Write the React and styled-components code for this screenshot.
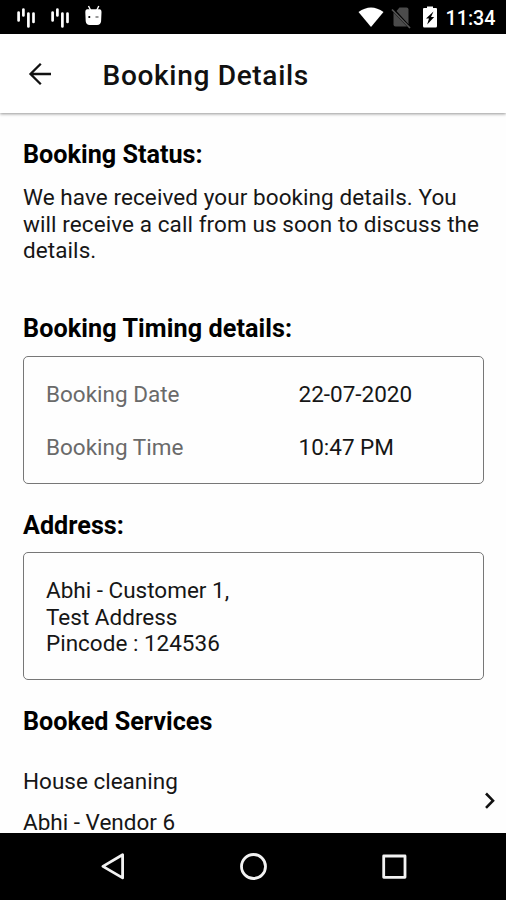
import React from 'react';
import styled, { createGlobalStyle } from 'styled-components';

const GlobalStyle = createGlobalStyle`
  * {
    box-sizing: border-box;
  }

  body {
    margin: 0;
    background: #fff;
  }
`;

const Screen = styled.div`
  display: flex;
  flex-direction: column;
  width: 506px;
  height: 900px;
  overflow: hidden;
  background: #fefefe;
  color: #111;
  font-family: Roboto, 'Liberation Sans', sans-serif;
`;

const StatusBar = styled.div`
  display: flex;
  flex: none;
  justify-content: space-between;
  height: 34px;
  background: #000;
`;

const Clock = styled.span`
  margin-left: 9px;
  color: #fff;
  font-size: 19.7px;
  font-weight: 500;
  line-height: 37px;
`;

const StatusGroup = styled.div`
  display: flex;
  padding: ${(props) => props.$padding};
`;

const AppBar = styled.header`
  display: flex;
  flex: none;
  align-items: center;
  height: 79px;
  padding-left: 26px;
  background: #fff;
  box-shadow: 0 1px 3px rgba(0, 0, 0, 0.42);
  z-index: 1;
`;

const Title = styled.h1`
  margin: 5px 0 0 48.5px;
  font-size: 28.1px;
  font-weight: 500;
  line-height: 34px;
  letter-spacing: 0.65px;
`;

const Content = styled.main`
  flex: 1;
  min-height: 0;
  overflow: hidden;
  padding: 27px 0 0 23px;
`;

const Section = styled.section`
  height: ${(props) => props.$height}px;
`;

const Heading = styled.h2`
  margin: 0 0 ${(props) => props.$gap}px;
  color: #000;
  font-size: 25.2px;
  font-weight: 700;
  line-height: 30px;
  letter-spacing: ${(props) => props.$spacing || 0}px;
  white-space: nowrap;
`;

const Text = styled.p`
  margin: 0;
  color: ${(props) => (props.$muted ? '#6a6a6a' : '#161616')};
  font-size: 22.5px;
  line-height: 26.7px;
  white-space: pre-line;
`;

const Message = styled(Text)`
  letter-spacing: 0.08px;
`;

const Card = styled.div`
  width: 461px;
  height: 128px;
  padding: 24px 22px;
  border: 1px solid #777;
  border-radius: 5px;
`;

const Timing = styled(Card)`
  display: grid;
  grid-template-columns: 252.5px 1fr;
  row-gap: 26px;
  align-content: start;
`;

const Service = styled.div`
  display: flex;
  align-items: center;
  justify-content: space-between;
  padding-right: 10px;
`;

const ServiceLine = styled(Text)`
  line-height: 20px;
`;

const ServiceLines = styled.div`
  display: flex;
  flex-direction: column;
  gap: 21px;
`;

const NavBar = styled.nav`
  display: flex;
  flex: none;
  align-items: center;
  justify-content: center;
  gap: 112px;
  height: 67px;
  background: #000;
`;

const Icon = styled.svg`
  display: block;
  flex: none;
`;

const BarsIcon = () => (
  <Icon width="34" height="34" viewBox="0 0 34 34" fill="none" stroke="#fff" strokeWidth="2.7" strokeLinecap="round">
    <path d="M2.6 12.5v8M7.4 9.5v6M12.4 13.5v13M17.5 13.5v8.5" />
  </Icon>
);

const AndroidIcon = () => (
  <Icon width="20" height="34" viewBox="0 0 20 34">
    <path d="M4.5 6l2 4M14.8 6l-2 4" stroke="#fff" strokeWidth="1.4" />
    <path d="M3.3 9.3h12.2q2 0 2 3l-.4 9q-.4 3.7-4 3.7H5.7q-3.6 0-4-3.7l-.4-9q0-3 2-3z" fill="#fff" />
    <circle cx="5.3" cy="17" r="1.1" fill="#000" />
    <path d="M11.5 17h3" stroke="#555" strokeWidth="1.2" />
  </Icon>
);

const WifiIcon = () => (
  <Icon width="26" height="34" viewBox="0 0 26 34">
    <path d="M.5 12Q13 2.8 25.5 12L13 27z" fill="#fff" />
  </Icon>
);

const NoSimIcon = () => (
  <Icon width="20" height="34" viewBox="0 0 20 34">
    <path d="M8.5 7.5h7q2 0 2 2v14.8L5.5 11z" fill="#4b4b4b" />
    <path d="M2.5 12.5l13.5 14H4.5q-2 0-2-2z" fill="#4b4b4b" />
    <path d="M1 9.5L19 28" stroke="#555" strokeWidth="1.7" />
  </Icon>
);

const BatteryIcon = () => (
  <Icon width="14" height="34" viewBox="0 0 14 34">
    <path d="M4 6.5h6V8h3q1 0 1 1v17q0 1.500-1.300 1.500H1.300Q0 27.500 0 26V9q0-1 1-1h3z" fill="#fff" />
    <path d="M10.5 11.5L3 18.5h3L4.2 24.5l7-7.5H8z" fill="#000" />
  </Icon>
);

const BackArrow = () => (
  <Icon width="28" height="28" viewBox="0 0 28 28" fill="none" stroke="#111" strokeWidth="2.3">
    <path d="M25 14H4.500M14.800 3.800L4.500 14l10.300 10.200" />
  </Icon>
);

const Chevron = () => (
  <Icon width="11" height="20" viewBox="0 0 11 20" fill="none" stroke="#111" strokeWidth="2.6">
    <path d="M1 1.500L8 8.700l-7 7.200" />
  </Icon>
);

const NavIcon = ({ children }) => (
  <Icon width="29" height="29" viewBox="0 0 29 29" fill="none" stroke="#f2f2f2" strokeWidth="2.8" strokeLinejoin="round">
    {children}
  </Icon>
);

const timing = [
  { label: 'Booking Date', value: '22-07-2020' },
  { label: 'Booking Time', value: '10:47 PM' },
];

export default function App() {
  return (
    <Screen>
      <GlobalStyle />
      <StatusBar>
        <StatusGroup $padding="0 0 0 16px">
          <BarsIcon />
          <BarsIcon />
          <AndroidIcon />
        </StatusGroup>
        <StatusGroup $padding="0 10.5px 0 0">
          <WifiIcon />
          <StatusGroup $padding="0 12px 0 7px">
            <NoSimIcon />
          </StatusGroup>
          <BatteryIcon />
          <Clock>11:34</Clock>
        </StatusGroup>
      </StatusBar>

      <AppBar>
        <BackArrow />
        <Title>Booking Details</Title>
      </AppBar>

      <Content>
        <Section $height={174}>
          <Heading $gap={14}>Booking Status:</Heading>
          <Message>
            {'We have received your booking details. You\nwill receive a call from us soon to discuss the\ndetails.'}
          </Message>
        </Section>

        <Section $height={197}>
          <Heading $gap={12} $spacing={0.08}>Booking Timing details:</Heading>
          <Timing>
            {timing.map((item) => (
              <React.Fragment key={item.label}>
                <Text $muted>{item.label}</Text>
                <Text>{item.value}</Text>
              </React.Fragment>
            ))}
          </Timing>
        </Section>

        <Section $height={196}>
          <Heading $gap={11}>Address:</Heading>
          <Card>
            <Text>{'Abhi - Customer 1,\nTest Address\nPincode : 124536'}</Text>
          </Card>
        </Section>

        <Section $height={125}>
          <Heading $gap={34}>Booked Services</Heading>
          <Service>
            <ServiceLines>
              <ServiceLine>House cleaning</ServiceLine>
              <ServiceLine>Abhi - Vendor 6</ServiceLine>
            </ServiceLines>
            <Chevron />
          </Service>
        </Section>
      </Content>

      <NavBar>
        <NavIcon>
          <path d="M24.600 2.700v23.200L4.900 14.400z" />
        </NavIcon>
        <NavIcon>
          <circle cx="14.500" cy="14.500" r="12" />
        </NavIcon>
        <NavIcon>
          <rect x="3.700" y="4" width="21.300" height="21.300" />
        </NavIcon>
      </NavBar>
    </Screen>
  );
}
